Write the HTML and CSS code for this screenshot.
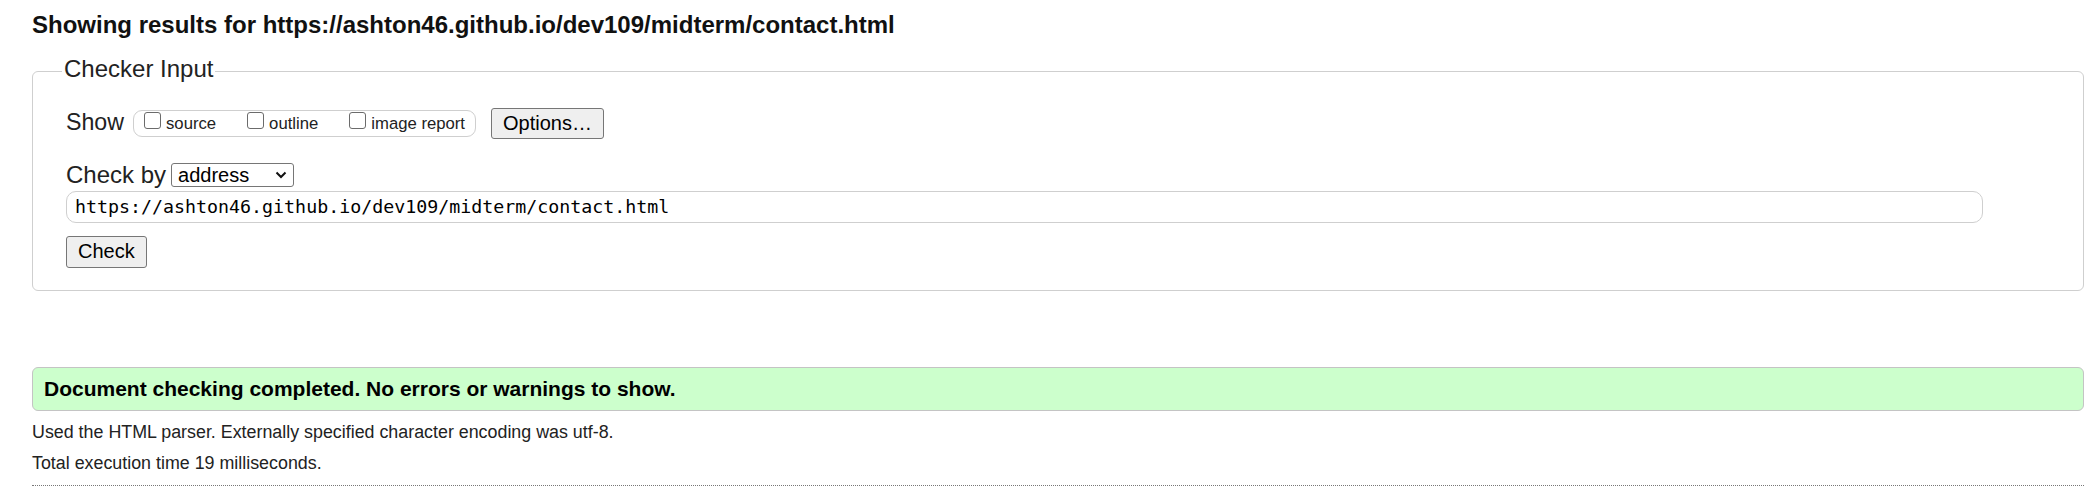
FILE: index.html
```html
<!DOCTYPE html>
<html lang="en">
<head>
<meta charset="utf-8">
<title>Showing results</title>
<link rel="stylesheet" href="styles.css">
</head>
<body>
<h2 class="title">Showing results for https://ashton46.github.io/dev109/midterm/contact.html</h2>
<fieldset class="checker">
  <legend class="legend">Checker Input</legend>
  <div class="row row-show">
    <span class="lbl lbl-show">Show</span>
    <span class="pill">
      <span class="opt"><span class="cb"></span><span class="opt-text">source</span></span>
      <span class="opt opt-gap"><span class="cb"></span><span class="opt-text">outline</span></span>
      <span class="opt opt-gap"><span class="cb"></span><span class="opt-text">image report</span></span>
    </span>
    <span class="btn btn-options">Options…</span>
  </div>
  <div class="row row-by">
    <span class="lbl lbl-by">Check by</span>
    <span class="select"><span class="select-text">address</span><svg class="chev" width="12" height="8" viewBox="0 0 12 8"><path d="M1.5 1.5 L6 6 L10.5 1.5" fill="none" stroke="#111" stroke-width="2"/></svg></span>
  </div>
  <div class="row row-url">
    <span class="url">https://ashton46.github.io/dev109/midterm/contact.html</span>
  </div>
  <div class="row row-check">
    <span class="btn btn-check">Check</span>
  </div>
</fieldset>
<div class="success">Document checking completed. No errors or warnings to show.</div>
<p class="info">Used the HTML parser. Externally specified character encoding was utf-8.</p>
<p class="info">Total execution time 19 milliseconds.</p>
<hr class="rule">
</body>
</html>
```
FILE: styles.css
```css
html, body {
  background: #ffffff;
}
body {
  margin: 0;
  padding: 0 14px 0 32px;
  font-family: "Liberation Sans", Arial, sans-serif;
  color: #222;
}
.title {
  margin: 11px 0 18px;
  font-size: 24px;
  line-height: 28px;
  font-weight: bold;
  color: #111;
}
.checker {
  margin: 0;
  padding: 23px 100px 22px 33px;
  border: 1px solid #cfcfcf;
  border-radius: 6px;
  min-width: 0;
}
.legend {
  margin-left: -4px;
  padding: 0 2px 4px;
  font-size: 24px;
  line-height: 24px;
  color: #222;
}
.row {
  display: flex;
  align-items: center;
}
.lbl-show {
  font-size: 23.2px;
  line-height: 27px;
  margin-right: 9px;
  margin-bottom: 3px;
}
.pill {
  display: flex;
  align-items: center;
  box-sizing: border-box;
  height: 27px;
  padding: 0 10px;
  border: 1px solid #cfcfcf;
  border-radius: 9px;
}
.opt {
  display: flex;
  align-items: center;
}
.opt-gap {
  margin-left: 31px;
}
.cb {
  box-sizing: border-box;
  width: 17px;
  height: 17px;
  margin-bottom: 6px;
  border: 1px solid #6b6b6b;
  border-radius: 3px;
  background: #fff;
}
.opt-text {
  margin-left: 5px;
  font-size: 16.7px;
  line-height: 18px;
  color: #222;
}
.btn {
  display: inline-block;
  box-sizing: border-box;
  padding: 3px 11px;
  border: 1px solid #767676;
  border-radius: 3px;
  background: #efefef;
  font-size: 20px;
  line-height: 23px;
  color: #000;
}
.btn-options {
  margin-left: 15px;
  height: 31px;
}
.row-by {
  margin-top: 22px;
}
.lbl-by {
  font-size: 24px;
  line-height: 28px;
  margin-right: 5px;
}
.select {
  display: flex;
  align-items: center;
  justify-content: space-between;
  box-sizing: border-box;
  width: 123px;
  height: 24px;
  padding: 0 6px 0 6px;
  border: 1px solid #767676;
  border-radius: 3px;
  background: #fff;
}
.select-text {
  font-size: 20px;
  line-height: 22px;
  color: #000;
}
.chev {
  display: block;
}
.row-url {
  margin-top: 2px;
}
.url {
  display: block;
  box-sizing: border-box;
  width: 100%;
  height: 32px;
  padding: 0 8px;
  border: 1px solid #cfcfcf;
  border-radius: 10px;
  font-family: "DejaVu Sans Mono", "Liberation Mono", monospace;
  font-size: 18.3px;
  line-height: 30px;
  color: #000;
  white-space: nowrap;
}
.row-check {
  margin-top: 13px;
}
.btn-check {
  height: 32px;
  padding: 3px 11px 4px;
}
.checker {
  padding-bottom: 22px;
}
.success {
  margin-top: 76px;
  padding: 9px 11px;
  border: 1px solid #c4c4c4;
  border-radius: 6px;
  background: #ccffcc;
  font-size: 21px;
  line-height: 24px;
  font-weight: bold;
  color: #000;
}
.info {
  margin: 11px 0 0;
  font-size: 17.85px;
  line-height: 20px;
  color: #222;
}
.rule {
  margin: 12px 0 0;
  height: 0;
  border: 0;
  border-top: 1px dotted #777;
}
```
